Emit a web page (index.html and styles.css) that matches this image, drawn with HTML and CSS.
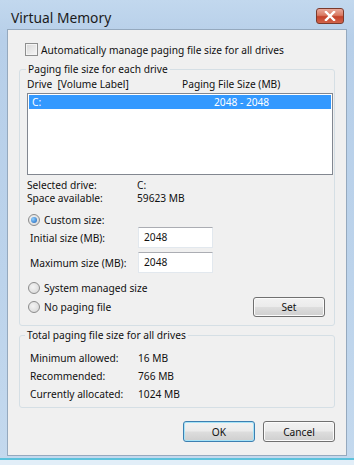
FILE: index.html
```html
<!DOCTYPE html>
<html lang="en">
<head>
  <meta charset="UTF-8" />
  <title>Virtual Memory</title>
  <link rel="stylesheet" href="styles.css">
</head>
<body>
  <div class="window">
    <div class="titlebar">
      <span class="title">Virtual Memory</span>
      <span class="close">
        <svg width="12" height="10" viewBox="0 0 12 10"><path d="M2 1 L10 9 M10 1 L2 9" stroke="#fff" stroke-width="2.4" stroke-linecap="square"/></svg>
      </span>
    </div>
    <div class="client">
      <div class="check-row"><span class="checkbox"></span>Automatically manage paging file size for all drives</div>

      <fieldset class="group drives">
        <legend>Paging file size for each drive</legend>
        <div class="list-head">
          <span class="col-drive">Drive&nbsp; [Volume Label]</span>
          <span class="col-size">Paging File Size (MB)</span>
        </div>
        <div class="listbox">
          <div class="list-row selected">
            <span class="col-drive">C:</span>
            <span class="col-size">2048 - 2048</span>
          </div>
        </div>
        <div class="info">
          <span>Selected drive:</span><span>C:</span>
          <span>Space available:</span><span>59623 MB</span>
        </div>
        <div class="radio-row custom"><span class="radio checked"></span>Custom size:</div>
        <div class="field-row">
          <span class="field-label">Initial size (MB):</span>
          <span class="textbox">2048</span>
        </div>
        <div class="field-row max">
          <span class="field-label">Maximum size (MB):</span>
          <span class="textbox">2048</span>
        </div>
        <div class="radio-row system"><span class="radio"></span>System managed size</div>
        <div class="last-row">
          <div class="radio-row"><span class="radio"></span>No paging file</div>
          <span class="button set">Set</span>
        </div>
      </fieldset>

      <fieldset class="group totals">
        <legend>Total paging file size for all drives</legend>
        <div class="totals-grid">
          <span>Minimum allowed:</span><span>16 MB</span>
          <span>Recommended:</span><span>766 MB</span>
          <span>Currently allocated:</span><span>1024 MB</span>
        </div>
      </fieldset>

      <div class="actions">
        <span class="button default">OK</span>
        <span class="button">Cancel</span>
      </div>
    </div>
  </div>
</body>
</html>
```
FILE: styles.css
```css
* {
  box-sizing: border-box;
}
body {
  margin: 0;
  font-family: 'Noto Sans', 'Open Sans', sans-serif;
  font-size: 10.2px;
  color: #111;
}
.window {
  width: 354px;
  height: 465px;
  background:
    linear-gradient(0deg, #e2eef8 0 5px, #5cc2dc 5px 7px, transparent 7px),
    linear-gradient(180deg, #c2d8ee 0%, #b7cfe9 8%, #bcd3eb 60%, #c4d9ee 100%);
  padding: 0 8px;
  overflow: hidden;
}
.titlebar {
  height: 30px;
  display: flex;
  align-items: center;
  justify-content: space-between;
  padding: 5px 3px 0 3px;
}
.title {
  font-size: 13.8px;
  color: #1b1b1b;
}
.close {
  width: 28px;
  height: 16px;
  margin-right: -1px;
  margin-top: -4px;
  border: 1px solid #7a3a2c;
  border-radius: 3px;
  background: linear-gradient(180deg, #e9a99b 0%, #d97a63 45%, #c3412a 55%, #d2644b 100%);
  display: flex;
  align-items: center;
  justify-content: center;
}
.client {
  height: 425px;
  background: #f0f0f0;
  box-shadow: 0 0 0 1px #95a9be;
  padding: 13px 11px 0 11px;
}
.check-row {
  display: flex;
  align-items: center;
  height: 13px;
  padding-left: 6px;
  gap: 3px;
}
.checkbox {
  width: 13px;
  height: 13px;
  border: 1px solid #8e8f8f;
  background: linear-gradient(135deg, #d8d8d8, #f6f6f6);
  box-shadow: inset 0 0 0 1px #f4f4f4;
}
.group {
  margin: 5px 0 0 0;
  border: 1px solid #d5dfe5;
  border-radius: 3px;
  min-width: 0;
}
.group legend {
  padding: 0 2px;
  margin-left: -1px;
  line-height: 16px;
  height: 16px;
}
.drives {
  padding: 0 1px 8px 7px;
}
.list-head,
.list-row {
  display: flex;
}
.list-head {
  height: 15px;
  line-height: 15px;
}
.col-drive {
  width: 155px;
}
.listbox {
  margin-top: 1px;
  height: 82px;
  background: #fff;
  border: 1px solid #828790;
  padding: 1px;
}
.list-row {
  height: 14px;
  line-height: 14px;
  padding-left: 3px;
}
.list-row.selected {
  background: #3399ff;
  color: #fff;
}
.list-row .col-drive {
  width: 182px;
}
.info,
.totals-grid {
  display: grid;
  grid-template-columns: 110px auto;
}
.info {
  margin-top: 4px;
  line-height: 13px;
}
.radio-row {
  display: flex;
  align-items: center;
  gap: 4px;
  padding-left: 1px;
}
.custom {
  height: 15px;
  margin-top: 7px;
}
.radio {
  width: 12px;
  height: 12px;
  border-radius: 50%;
  border: 1px solid #8c8c8c;
  background: radial-gradient(circle at 40% 40%, #f4f4f4, #d4d4d4);
  position: relative;
}
.radio.checked::after {
  content: "";
  position: absolute;
  left: 2px;
  top: 2px;
  width: 6px;
  height: 6px;
  border-radius: 50%;
  background: radial-gradient(circle at 35% 35%, #8fd0ff, #1a60b8);
}
.field-row {
  display: grid;
  grid-template-columns: 111px 75px;
  align-items: center;
  height: 21px;
}
.field-row.max {
  margin-top: 4px;
}
.field-label {
  padding-left: 3px;
}
.textbox {
  height: 21px;
  background: #fff;
  border: 1px solid #e2e8ee;
  border-top-color: #abadb3;
  padding: 2px 0 0 5px;
  line-height: 14px;
}
.system {
  height: 14px;
  margin-top: 8px;
}
.last-row {
  display: flex;
  justify-content: space-between;
  align-items: center;
  height: 20px;
  margin-top: 2px;
  padding-right: 8px;
}
.button {
  width: 72px;
  height: 21px;
  display: flex;
  align-items: center;
  justify-content: center;
  border: 1px solid #707070;
  border-radius: 3px;
  background: linear-gradient(180deg, #f2f2f2 0%, #ebebeb 48%, #dddddd 52%, #cfcfcf 100%);
  box-shadow: inset 0 0 0 1px #fbfbfb;
}
.set {
  height: 20px;
}
.totals {
  margin-top: 1px;
  padding: 6px 1px 4px 10px;
}
.totals legend {
  margin-left: -5px;
}
.totals-grid {
  grid-template-columns: 108px auto;
  grid-auto-rows: 18px;
  align-items: center;
}
.actions {
  display: flex;
  justify-content: flex-end;
  gap: 8px;
  margin-top: 13px;
}
.button.default {
  border-color: #3c7fb1;
  box-shadow: inset 0 0 0 1px #a6e3f7;
}
```
